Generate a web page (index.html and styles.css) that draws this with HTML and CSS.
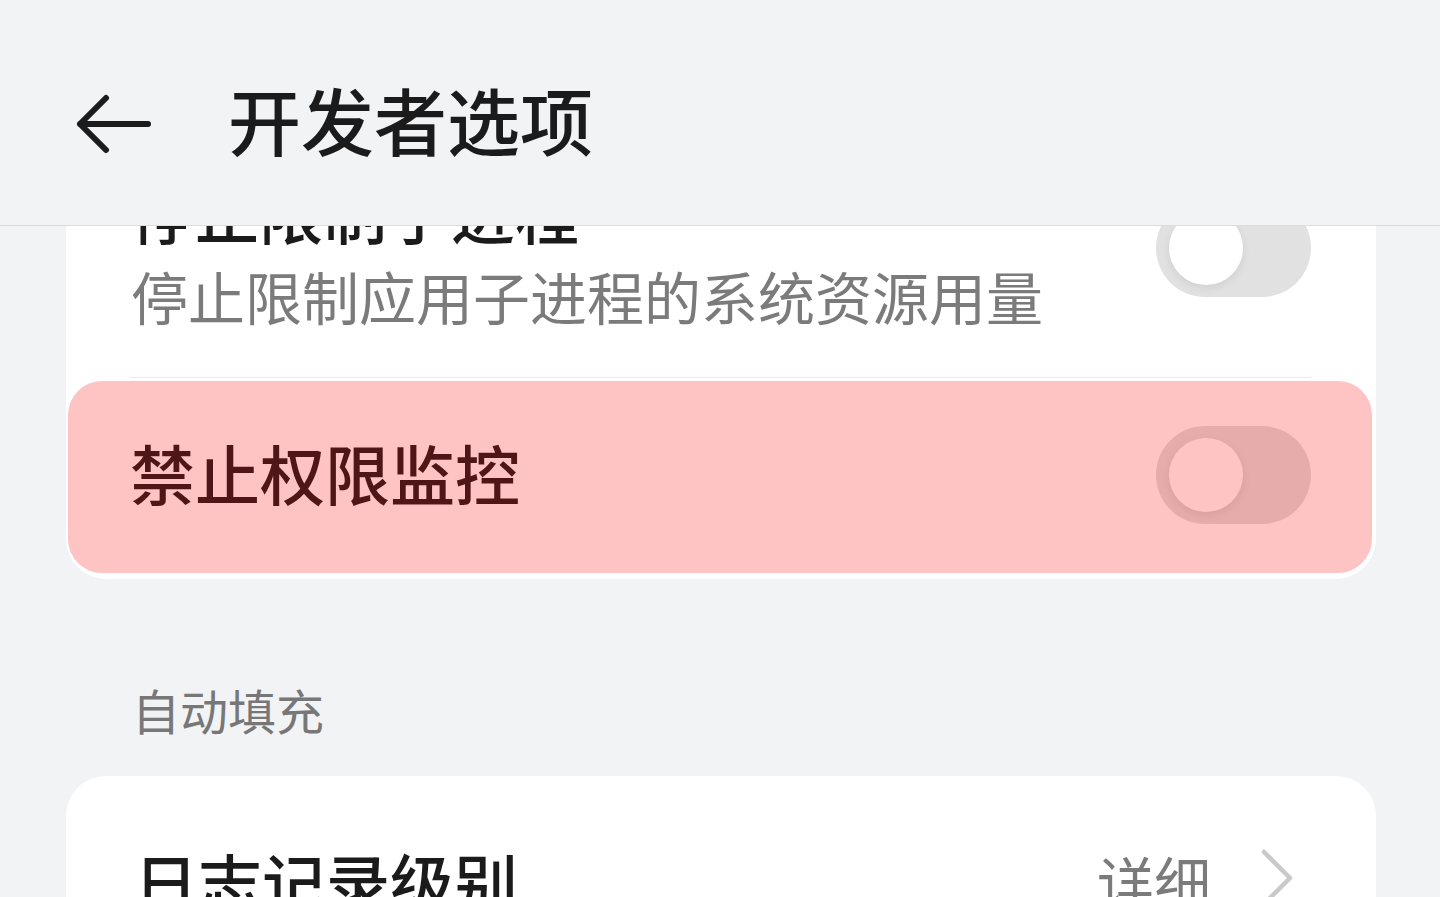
FILE: index.html
```html
<!DOCTYPE html>
<html lang="zh-CN">
<head>
  <meta charset="UTF-8" />
  <meta name="viewport" content="width=device-width, initial-scale=1" />
  <title>开发者选项</title>
  <link rel="stylesheet" href="styles.css">
</head>
<body>

  <div class="screen">
    <header class="topbar">
      <button class="back-btn" type="button" aria-label="返回">
        <svg width="76" height="62" viewBox="0 0 76 62">
          <path d="M4 31 H72 M30 5 L4 31 L30 57" fill="none" stroke="#1b1b1b" stroke-width="6" stroke-linecap="round" stroke-linejoin="round" />
        </svg>
      </button>
      <h1>开发者选项</h1>
    </header>

    <main class="content">
      <section class="card card-first">
        <div class="row row-two">
          <div class="row-text">
            <div class="row-title">停止限制子进程</div>
            <div class="row-sub">停止限制应用子进程的系统资源用量</div>
          </div>
          <span class="switch"><span class="knob"></span></span>
        </div>
        <div class="divider"></div>
        <div class="row row-highlight">
          <div class="row-title">禁止权限监控</div>
          <span class="switch"><span class="knob"></span></span>
        </div>
      </section>

      <div class="section-label">自动填充</div>

      <section class="card">
        <div class="row row-link">
          <div class="row-title">日志记录级别</div>
          <div class="row-value">
            <span>详细</span>
            <svg width="36" height="60" viewBox="0 0 36 60">
              <path d="M6 4 L32 30 L6 56" fill="none" stroke="#c9c9c9" stroke-width="4.5" stroke-linecap="round" stroke-linejoin="round" />
            </svg>
          </div>
        </div>
      </section>
    </main>
  </div>

</body>
</html>
```

FILE: styles.css
```css
body {
  margin: 0;
  font-family: "Noto Sans CJK SC", "Noto Sans", sans-serif;
  background: #f2f3f5;
  color: #1b1b1b;
}
.screen {
  width: 1440px;
  height: 897px;
  overflow: hidden;
  display: flex;
  flex-direction: column;
}
.topbar {
  height: 226px;
  box-sizing: border-box;
  padding-top: 12px;
  flex-shrink: 0;
  display: flex;
  align-items: center;
  border-bottom: 1px solid #dcdcde;
  background: #f2f3f5;
}
.back-btn {
  margin-left: 76px;
  margin-top: 10px;
  padding: 0;
  border: none;
  background: none;
  display: flex;
}
.topbar h1 {
  margin: 0 0 0 76px;
  font-size: 73px;
  font-weight: 500;
  line-height: 1;
}
.content {
  flex: 1;
  overflow: hidden;
}
.card {
  margin: 0 64px 0 66px;
  background: #ffffff;
  border-radius: 40px;
  overflow: hidden;
}
.card-first {
  margin-top: -107px;
  border-radius: 0 0 40px 40px;
}
.row {
  display: flex;
  align-items: center;
  justify-content: space-between;
}
.row-two {
  padding: 52px 65px 38px 65px;
}
.row-two .row-text {
  margin-bottom: 8px;
}
.row-two .switch {
  margin-bottom: 14px;
}
.row-title {
  font-size: 64px;
  font-weight: 500;
  line-height: 80px;
}
.row-sub {
  margin-top: 8px;
  font-size: 57px;
  line-height: 72px;
  color: #7b7b7b;
}
.divider {
  height: 1px;
  margin: 0 65px 0 64px;
  background: #ebebeb;
}
.switch {
  position: relative;
  width: 155px;
  height: 98px;
  border-radius: 49px;
  background: #e1e1e1;
  flex-shrink: 0;
}
.knob {
  position: absolute;
  left: 13px;
  top: 12px;
  width: 74px;
  height: 74px;
  border-radius: 50%;
  background: #ffffff;
  box-shadow: 0 3px 8px rgba(0, 0, 0, 0.08);
}
.row-highlight {
  margin: 3px 4px 6px 2px;
  height: 192px;
  padding: 0 61px 0 62px;
  border-radius: 34px;
  background: #fec4c4;
}
.row-highlight .row-title {
  font-size: 65px;
  margin-bottom: 10px;
  color: #4e1616;
}
.row-highlight .switch {
  margin-bottom: 4px;
  background: #e6acac;
}
.row-highlight .knob {
  background: #fec4c4;
  box-shadow: 0 3px 8px rgba(120, 40, 40, 0.1);
}
.section-label {
  margin: 98px 0 35px 132px;
  font-size: 48px;
  line-height: 64px;
  color: #777777;
}
.row-link {
  padding: 64px 82px 40px 68px;
  align-items: flex-start;
}
.row-value {
  display: flex;
  align-items: center;
  gap: 47px;
  font-size: 57px;
  line-height: 80px;
  color: #7b7b7b;
}
.row-value svg {
  margin-top: -4px;
}
```
